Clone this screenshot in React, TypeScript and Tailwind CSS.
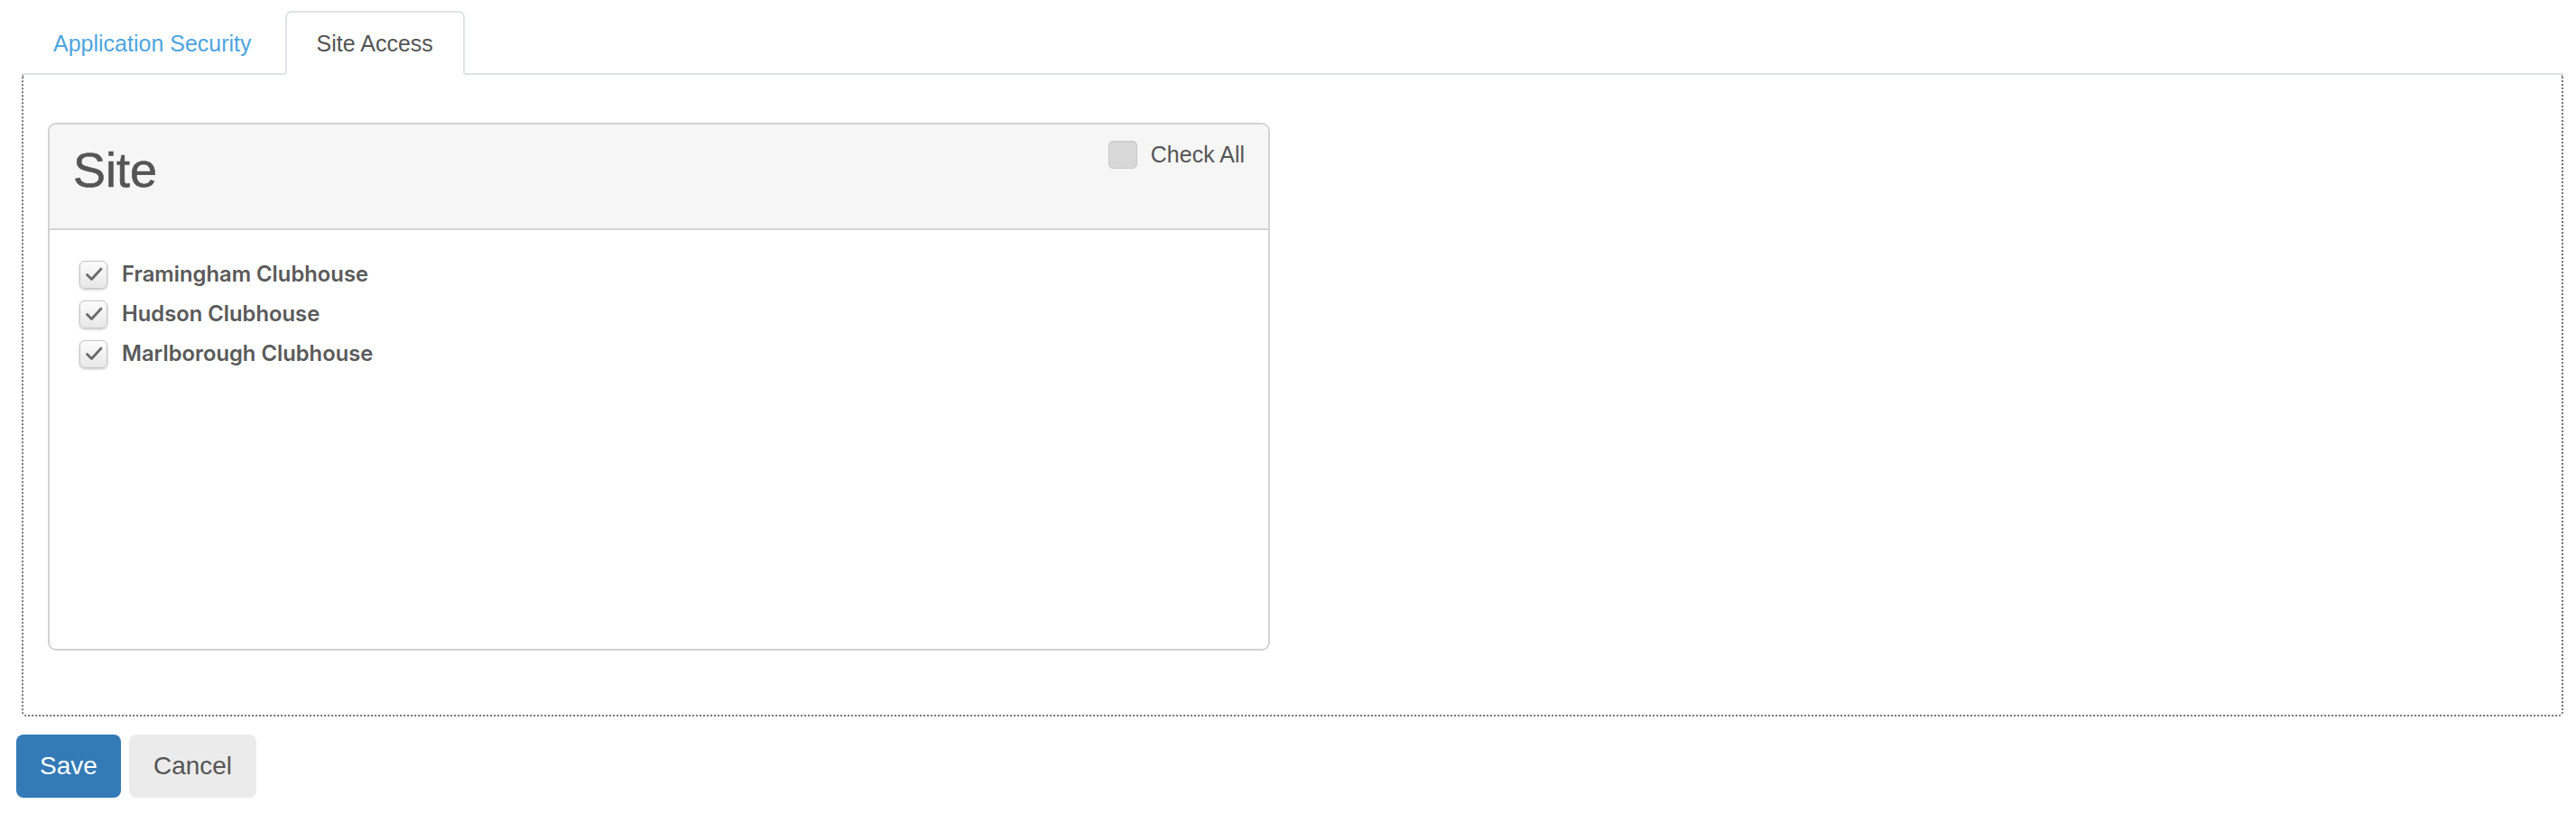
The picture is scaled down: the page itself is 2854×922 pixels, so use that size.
import React, { useState } from 'react'

const sites = ['Framingham Clubhouse', 'Hudson Clubhouse', 'Marlborough Clubhouse']

const CheckBox: React.FC<{ checked: boolean; onClick?: () => void }> = ({ checked, onClick }) => {
  if (!checked) {
    return (
      <span
        onClick={onClick}
        className="block w-[32px] h-[31px] rounded-[5px] bg-[#d8d8d8] border border-[#cacaca] shadow-[inset_0_1px_1px_rgba(0,0,0,0.04)]"
      />
    )
  }
  return (
    <span
      onClick={onClick}
      className="flex items-center justify-center w-[31px] h-[31px] rounded-[6px] border border-[#c8c8c8] bg-gradient-to-b from-[#fcfcfc] to-[#e8e8e8] shadow-[0_1px_3px_rgba(0,0,0,0.25)]"
    >
      <svg width="24" height="24" viewBox="0 0 24 24" fill="none">
        <path d="M4.5 12.5 L9.5 17.5 L20 6" stroke="#6a6a6a" strokeWidth="2.8" strokeLinecap="round" strokeLinejoin="round" />
      </svg>
    </span>
  )
}

const App: React.FC = () => {
  const [tab, setTab] = useState('site')
  const [checked, setChecked] = useState<boolean[]>([true, true, true])

  return (
    <div className="min-h-screen bg-white pt-[12px] pl-[18px] pr-[14px] font-['Liberation_Sans',Arial,sans-serif]">
      <div className="ml-[6px]">
        {/* Tabs */}
        <ul className="flex border-b-2 border-[#dfe3e8]">
          <li
            onClick={() => setTab('app')}
            className={`-mb-[2px] mr-[2px] h-[71px] flex items-center px-[33px] border-2 rounded-t-[7px] text-[25px] leading-[36px] cursor-pointer ${
              tab === 'app' ? 'border-[#dfe3e8] border-b-white bg-white text-[#555]' : 'border-transparent text-[#4ea5de]'
            }`}
          >
            Application Security
          </li>
          <li
            onClick={() => setTab('site')}
            className={`-mb-[2px] h-[71px] flex items-center px-[33px] border-2 rounded-t-[7px] text-[25px] leading-[36px] cursor-pointer ${
              tab === 'site' ? 'border-[#dfe3e8] border-b-white bg-white text-[#555]' : 'border-transparent text-[#4ea5de]'
            }`}
          >
            Site Access
          </li>
        </ul>

        {/* Tab content */}
        <div className="border-2 border-t-0 border-dotted border-[#737373] rounded-b-[5px] pt-[53px] pl-[27px] pb-[71px]">
          <div className="w-[1354px] h-[585px] border-2 border-[#d3d3d3] rounded-[9px] overflow-hidden">
            <div className="h-[117px] bg-[#f6f6f6] border-b-2 border-[#d3d3d3] flex justify-between items-start pl-[26px] pr-[26px]">
              <h2 className="mt-[21px] text-[54px] leading-[59px] text-[#555] [-webkit-text-stroke:0.6px_#555]">Site</h2>
              <label className="mt-[17px] flex items-center gap-[15px] text-[25px] leading-[32px] text-[#555] cursor-pointer">
                <CheckBox
                  checked={false}
                  onClick={() => setChecked(sites.map(() => true))}
                />
                Check All
              </label>
            </div>
            <div className="pt-[27px] pl-[33px]">
              {sites.map((s, i) => (
                <div key={s} className="h-[44px] flex items-center gap-[16px]">
                  <CheckBox
                    checked={checked[i]}
                    onClick={() => setChecked(checked.map((c, j) => (j === i ? !c : c)))}
                  />
                  <span className="font-['Inter',sans-serif] font-semibold text-[23.8px] text-[#5a5a5a]">{s}</span>
                </div>
              ))}
            </div>
          </div>
        </div>
      </div>

      {/* Actions */}
      <div className="mt-[20px] flex gap-[9px]">
        <button className="w-[116px] h-[70px] rounded-[8px] bg-[#337ab7] text-white text-[28px]">Save</button>
        <button className="w-[141px] h-[70px] rounded-[8px] bg-[#ebebeb] text-[#555] text-[28px]">Cancel</button>
      </div>
    </div>
  )
}

export default App
